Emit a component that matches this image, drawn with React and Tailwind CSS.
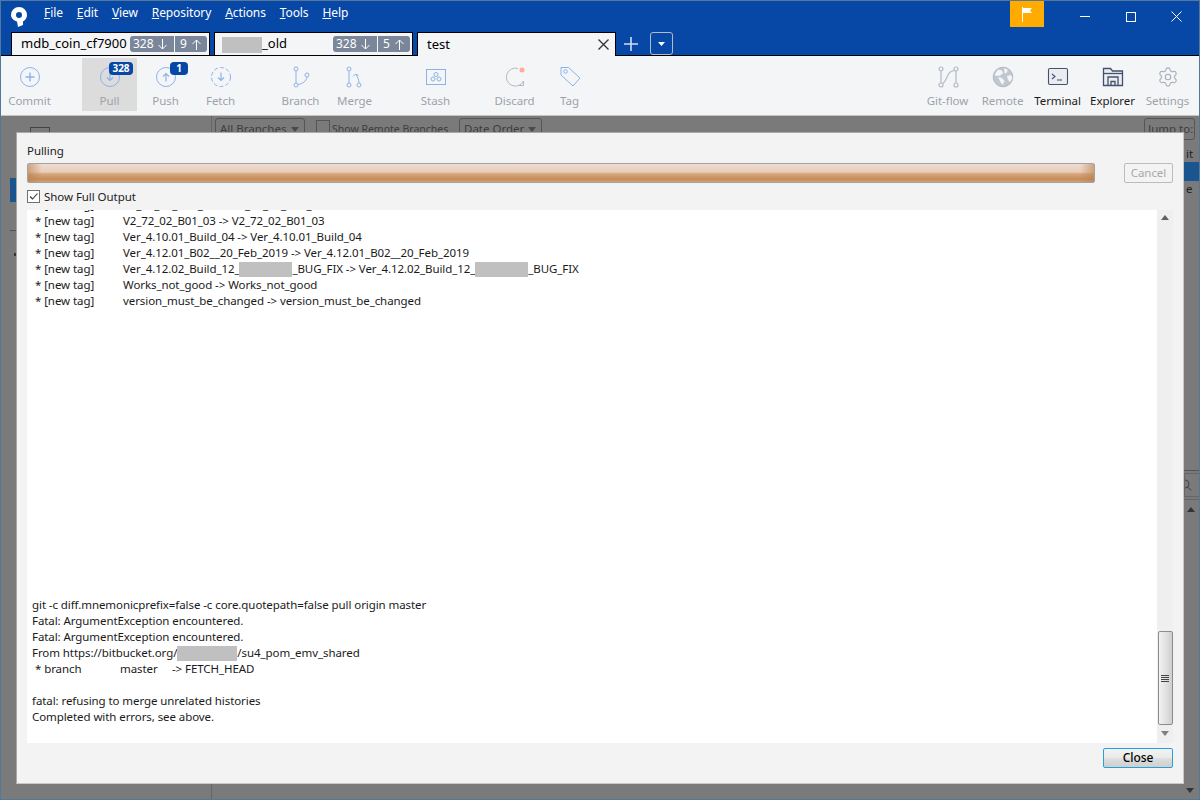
import { Settings } from 'lucide-react';

const FONT = "font-['Noto_Sans',sans-serif]";

function Menu({ first, rest }) {
  return (
    <span className="text-white">
      <span className="underline">{first}</span>{rest}
    </span>
  );
}

function Redacted({ w, h = 'h-[15px]', className = '' }) {
  return <span className={`inline-block align-middle bg-[#c0c0c0] ${w} ${h} ${className}`} />;
}

function Arrow({ up }) {
  return (
    <svg width="9" height="11" viewBox="0 0 9 11" fill="none" stroke="#fff" strokeWidth="1" className={up ? 'rotate-180' : ''}>
      <path d="M4.500 0v10M.500 6l4 4 4-4" />
    </svg>
  );
}

function CountPill({ down, up }) {
  return (
    <div className="flex h-4 text-[12px] leading-4 text-white shrink-0 gap-px">
      <span className="bg-[#7a869a] rounded-l-[3px] pl-[3px] flex items-center gap-[4px] w-[44px]">{down} <Arrow /></span>
      <span className="bg-[#7a869a] rounded-r-[3px] pl-[5px] flex items-center gap-[5px] w-[32px]">{up} <Arrow up /></span>
    </div>
  );
}

function Tab({ children, active, pill }) {
  return (
    <div className={`w-[199px] border-x border-t border-black bg-[#f4f5f7] flex items-center text-[13px] text-black pl-[9px] ${active ? 'h-6 -mb-px' : 'h-[23px]'}`}>
      <div className="flex-1 min-w-0 whitespace-nowrap">{children}</div>
      {pill}
    </div>
  );
}

function ToolButton({ label, icon, dark, pressed, badge, className = '' }) {
  return (
    <div className={`relative w-[55px] h-[53px] flex flex-col items-center shrink-0 ${pressed ? 'bg-[#dcdcdc]' : ''} ${className}`}>
      <div className="h-[22px] w-[22px] mt-[8px] flex items-center justify-center">{icon}</div>
      <div className={`mt-[5px] text-[11.500px] tracking-[-0.05px] leading-4 whitespace-nowrap ${dark ? 'text-[#1a1a1a]' : 'text-[#9da2aa]'}`}>{label}</div>
      {badge}
    </div>
  );
}

function Badge({ children, className }) {
  return (
    <span className={`absolute top-[4px] h-[13px] rounded-[4px] bg-[#0747a6] text-white text-[10px] leading-[13px] font-bold text-center ${className}`}>
      {children}
    </span>
  );
}

const BLUE = '#8db2ea';
const GRAY = '#b3bac5';
const NAVY = '#42526e';

function CircleIcon({ kind, dashed }) {
  return (
    <svg width="22" height="22" viewBox="0 0 22 22" fill="none" stroke={BLUE} strokeWidth="1">
      <circle cx="11" cy="11" r="9.500" strokeDasharray={dashed ? '4 2.200' : undefined} />
      {kind === 'plus' && <path d="M11 6.500v9M6.500 11h9" strokeWidth="1.400" />}
      {kind === 'down' && <path d="M11 6.500v8M8 11.500l3 3 3-3" strokeWidth="1.200" />}
      {kind === 'up' && <path d="M11 15.500v-8M8 10.500l3-3 3 3" strokeWidth="1.200" />}
    </svg>
  );
}

function BranchIcon() {
  return (
    <svg width="22" height="22" viewBox="0 0 22 22" fill="none" stroke={BLUE} strokeWidth="1">
      <circle cx="6" cy="3" r="2" />
      <circle cx="6" cy="19" r="2" />
      <circle cx="17" cy="9" r="2" />
      <path d="M6 5V17M8 18.500c4.500-.5 8.500-3.500 9-7.500" />
    </svg>
  );
}

function MergeIcon() {
  return (
    <svg width="22" height="22" viewBox="0 0 22 22" fill="none" stroke={BLUE} strokeWidth="1">
      <circle cx="5" cy="3" r="2" />
      <circle cx="5" cy="19" r="2" />
      <circle cx="15" cy="19" r="2" />
      <path d="M5 5V17M15 17c0-3.500-1.500-5.500-3-9M9 10.500L11.500 8l3 1.500" />
    </svg>
  );
}

function StashIcon() {
  return (
    <svg width="22" height="22" viewBox="0 0 22 22" fill="none" stroke={BLUE} strokeWidth="1">
      <rect x="1.500" y="3.500" width="19" height="15" />
      <circle cx="11" cy="8.500" r="2" />
      <circle cx="8" cy="13" r="2" />
      <circle cx="14" cy="13" r="2" />
    </svg>
  );
}

function DiscardIcon() {
  return (
    <svg width="22" height="22" viewBox="0 0 22 22" fill="none">
      <path d="M14 2.500A9 9 0 1 0 19.500 15" stroke={GRAY} strokeWidth="1" />
      <path d="M15 19.500h4.500V15" stroke={GRAY} strokeWidth="1" />
      <circle cx="18" cy="4" r="2.500" fill="#ffab9a" />
    </svg>
  );
}

function TagIcon() {
  return (
    <svg width="22" height="22" viewBox="0 0 22 22" fill="none" stroke={BLUE} strokeWidth="1">
      <path d="M2 1.500h7.500L21 12l-7 8L2 9z" />
      <circle cx="6.500" cy="5.500" r="1.800" />
    </svg>
  );
}

function GitFlowIcon() {
  return (
    <svg width="22" height="22" viewBox="0 0 22 22" fill="none" stroke={GRAY} strokeWidth="1.200">
      <circle cx="4" cy="3" r="2" />
      <circle cx="4" cy="19" r="2" />
      <circle cx="19" cy="3" r="2" />
      <circle cx="19" cy="19" r="2" />
      <path d="M4 5v12M19 5v12M5.500 17.500C11 15 9 5 17.500 4.500" />
    </svg>
  );
}

function GlobeIcon() {
  return (
    <svg width="22" height="22" viewBox="0 0 22 22" fill="none">
      <circle cx="11" cy="11" r="9.800" fill="#c1c7d0" stroke={GRAY} />
      <path d="M6 3.500l4 1 1 3-3 2-3 .5-2.500-1M12 2l4 2-1.500 3-2 .5M6 11l4 1 2.500 3-2 4-2-3zM15 10l4-1 1.500 3-2.500 4-2-2z" fill="#f4f5f7" />
    </svg>
  );
}

function TerminalIcon() {
  return (
    <svg width="22" height="22" viewBox="0 0 22 22" fill="none" stroke={NAVY} strokeWidth="1.100">
      <rect x="1.500" y="2.500" width="19" height="16" rx="1.500" fill="#ebecf0" />
      <path d="M5 8l3 2.500L5 13M10 14h5" />
    </svg>
  );
}

function ExplorerIcon() {
  return (
    <svg width="22" height="22" viewBox="0 0 22 22" fill="none" stroke={NAVY} strokeWidth="1.300">
      <path d="M1.500 19.500V2.500h7l2 2.500h10v14.500z" fill="#ebecf0" />
      <path d="M1.500 7.500h19" />
      <path d="M6 19.500v-8.500h10v8.500M9 19.500v-4h4v4" />
    </svg>
  );
}

function Caret() {
  return <svg width="8" height="5" viewBox="0 0 8 5" className="shrink-0"><path d="M0 0h8L4 5z" fill="#4a4a4a" /></svg>;
}

function LogLine({ tag, children }) {
  return (
    <div className="h-4 leading-4 whitespace-nowrap flex">
      <span className="w-[91px] pl-[3px] shrink-0">{tag}</span>
      <span>{children}</span>
    </div>
  );
}

function Log() {
  const tag = '* [new tag]';
  return (
    <div className="flex-1 min-w-0 bg-white overflow-hidden flex flex-col justify-between pl-[5px] pb-[18px] text-[11.500px] tracking-[-0.08px] text-[#1a1a1a]">
      <div className="-mt-[13px]">
        <LogLine tag={tag}>V2_72_02_B01_02 -&gt; V2_72_02_B01_02</LogLine>
        <LogLine tag={tag}>V2_72_02_B01_03 -&gt; V2_72_02_B01_03</LogLine>
        <LogLine tag={tag}>Ver_4.10.01_Build_04 -&gt; Ver_4.10.01_Build_04</LogLine>
        <LogLine tag={tag}>Ver_4.12.01_B02__20_Feb_2019 -&gt; Ver_4.12.01_B02__20_Feb_2019</LogLine>
        <LogLine tag={tag}>
          Ver_4.12.02_Build_12_<Redacted w="w-[53px]" />_BUG_FIX -&gt; Ver_4.12.02_Build_12_<Redacted w="w-[53px]" />_BUG_FIX
        </LogLine>
        <LogLine tag={tag}>Works_not_good -&gt; Works_not_good</LogLine>
        <LogLine tag={tag}>version_must_be_changed -&gt; version_must_be_changed</LogLine>
      </div>
      <div className="leading-4 whitespace-nowrap">
        <div>git -c diff.mnemonicprefix=false -c core.quotepath=false pull origin master</div>
        <div>Fatal: ArgumentException encountered.</div>
        <div>Fatal: ArgumentException encountered.</div>
        <div>From https://bitbucket.org/<Redacted w="w-[60px]" />/su4_pom_emv_shared</div>
        <div className="flex pl-[3px]">
          <span className="w-[85px]">* branch</span>
          <span className="w-[52px]">master</span>
          <span>-&gt; FETCH_HEAD</span>
        </div>
        <div className="h-4" />
        <div>fatal: refusing to merge unrelated histories</div>
        <div>Completed with errors, see above.</div>
      </div>
    </div>
  );
}

function Scrollbar() {
  return (
    <div className="w-4 bg-[#efefef] flex flex-col items-center shrink-0">
      <svg width="8" height="5" viewBox="0 0 8 5" className="mt-[5px]"><path d="M4 0l4 5H0z" fill="#606060" /></svg>
      <div className="flex-1" />
      <div className="w-[15px] h-[94px] rounded-[2px] border border-[#8c8c8c] bg-gradient-to-r from-[#f2f2f2] via-[#e2e2e2] to-[#cfcfcf] flex flex-col items-center justify-center gap-px">
        <div className="w-[8px] h-px bg-[#444]" />
        <div className="w-[8px] h-px bg-[#444]" />
        <div className="w-[8px] h-px bg-[#444]" />
        <div className="w-[8px] h-px bg-[#444]" />
      </div>
      <svg width="8" height="5" viewBox="0 0 8 5" className="mt-[6px] mb-[7px]"><path d="M0 0h8L4 5z" fill="#808080" /></svg>
    </div>
  );
}

function PullDialog() {
  return (
    <div className="absolute left-[15px] top-[131px] w-[1168px] h-[652px] bg-[#f3f3f3] border border-[#a8a8a8] border-r-[#c8c8c8] border-b-[#c8c8c8] flex flex-col pl-[10px] text-[11.500px] tracking-[-0.06px]">
      <div className="h-[16px] mt-[10px] leading-4 text-[#222]">Pulling</div>
      <div className="flex items-center mt-[4px] h-[20px]">
        <div className="w-[1068px] h-[20px] rounded-[2px] border border-[#a3a3a3] bg-[linear-gradient(to_bottom,#efdcd1_0%,#e8cdb9_45%,#d6a67c_55%,#c68d5a_85%,#d2a27a_100%)] relative overflow-hidden">
          <div className="absolute left-0 top-0 bottom-0 w-[14px] bg-gradient-to-r from-[#b9804f]/60 to-transparent" />
          <div className="absolute right-0 top-0 bottom-0 w-[14px] bg-gradient-to-l from-[#b9804f]/60 to-transparent" />
        </div>
        <div className="ml-[29px] w-[49px] h-[20px] rounded-[2px] border border-[#bcbcbc] leading-[18px] text-center text-[#a9a9a9]">Cancel</div>
      </div>
      <div className="flex items-center mt-[6px] h-[16px] text-[#222]">
        <svg width="13" height="13" viewBox="0 0 13 13" fill="none" className="mb-[2px]">
          <rect x="0.500" y="0.500" width="12" height="12" fill="#fff" stroke="#707070" />
          <path d="M3 6.500l2.500 2.500L10.500 3.500" stroke="#333" strokeWidth="1.100" />
        </svg>
        <span className="ml-[4px]">Show Full Output</span>
      </div>
      <div className="flex mt-[5px] h-[533px] w-[1146px]">
        <Log />
        <Scrollbar />
      </div>
      <div className="flex justify-end w-[1146px] mt-[5px]">
        <div className="w-[70px] h-[20px] rounded-[2px] border border-[#26a0da] bg-[linear-gradient(to_bottom,#f2f2f2_0%,#ebebeb_45%,#dddddd_55%,#cfcfcf_100%)] text-[12px] font-medium leading-[18px] text-center text-black">Close</div>
      </div>
    </div>
  );
}

export default function App() {
  return (
    <div className={`relative w-[1200px] h-[800px] overflow-hidden border border-[#54779c] bg-[#7a7a7a] flex flex-col ${FONT}`}>
      {/* Title bar with menus and tabs */}
      <div className="h-[55px] bg-[#0747a6] border-b border-black shrink-0 flex flex-col">
        <div className="h-[31px] flex items-start shrink-0">
          <svg width="20" height="22" viewBox="0 0 20 22" className="ml-[9px] mt-[5px]">
            <path fillRule="evenodd" fill="#fff" d="M9 1a8 8 0 0 1 8 8c0 3-1.500 5-4 6.500V19l-5 2-1-5.500C3.500 14.500 1 12 1 9a8 8 0 0 1 8-8zm0 5a3 3 0 1 0 0 6 3 3 0 0 0 0-6z" />
          </svg>
          <div className="ml-[14px] mt-[4px] flex gap-[14px] text-[12px] tracking-[-0.1px] leading-4">
            <Menu first="F" rest="ile" />
            <Menu first="E" rest="dit" />
            <Menu first="V" rest="iew" />
            <Menu first="R" rest="epository" />
            <Menu first="A" rest="ctions" />
            <Menu first="T" rest="ools" />
            <Menu first="H" rest="elp" />
          </div>
          <div className="flex-1" />
          <div className="w-[34px] h-[26px] bg-[#ffab00] flex items-start justify-center">
            <svg width="12" height="16" viewBox="0 0 12 16" className="mt-[5px]">
              <path d="M1.500 1v15" stroke="#fff" />
              <path d="M2 2h9l-2 2.500L11 7H2z" fill="#fff" />
            </svg>
          </div>
          <div className="w-[155px] h-[31px] flex items-center text-white">
            <div className="w-[1px] ml-[35px]" />
            <div className="w-[10px] h-px bg-white" />
            <div className="w-[10px] h-[10px] border border-white ml-[36px]" />
            <svg width="11" height="11" viewBox="0 0 11 11" className="ml-[35px]"><path d="M.500.500l10 10M10.500.500l-10 10" stroke="#fff" /></svg>
          </div>
        </div>
        <div className="flex items-end pl-[10px] gap-[4px] h-[23px]">
          <Tab pill={<div className="mr-[2px]"><CountPill down="328" up="9" /></div>}>mdb_coin_cf7900</Tab>
          <Tab pill={<div className="mr-[2px]"><CountPill down="328" up="5" /></div>}><Redacted w="w-[40px]" h="h-[16px]" className="-ml-[2px]" />_old</Tab>
          <Tab active pill={<svg width="11" height="11" viewBox="0 0 11 11" className="mr-[6px]"><path d="M.500.500l10 10M10.500.500l-10 10" stroke="#333" strokeWidth="1.300" /></svg>}>test</Tab>
          <svg width="16" height="16" viewBox="0 0 16 16" className="ml-[3px] mb-[3px] shrink-0"><path d="M8 1v14M1 8h14" stroke="#d4dcec" strokeWidth="1.600" /></svg>
          <div className="ml-[7px] w-[23px] h-[23px] rounded-[3px] border border-[#b3bac5] flex items-center justify-center">
            <svg width="7" height="4" viewBox="0 0 7 4"><path d="M0 0h7L3.500 4z" fill="#fff" /></svg>
          </div>
        </div>
      </div>

      {/* Toolbar */}
      <div className="h-[60px] bg-[#f4f5f7] border-b border-[#c4c4c4] shrink-0 flex pt-[2px] pl-[1px]">
        <ToolButton label="Commit" icon={<CircleIcon kind="plus" />} />
        <ToolButton label="Pull" pressed className="ml-[25px]" icon={<CircleIcon kind="down" />} badge={<Badge className="left-[27px] w-[24px]">328</Badge>} />
        <ToolButton label="Push" className="ml-px" icon={<CircleIcon kind="up" />} badge={<Badge className="left-[32px] w-[18px]">1</Badge>} />
        <ToolButton label="Fetch" icon={<CircleIcon kind="down" dashed />} />
        <ToolButton label="Branch" className="ml-[25px]" icon={<BranchIcon />} />
        <ToolButton label="Merge" className="-ml-px" icon={<MergeIcon />} />
        <ToolButton label="Stash" className="ml-[26px]" icon={<StashIcon />} />
        <ToolButton label="Discard" className="ml-[24px]" icon={<DiscardIcon />} />
        <ToolButton label="Tag" icon={<TagIcon />} />
        <div className="flex-1" />
        <ToolButton label="Git-flow" icon={<GitFlowIcon />} />
        <ToolButton label="Remote" icon={<GlobeIcon />} />
        <ToolButton label="Terminal" dark icon={<TerminalIcon />} />
        <ToolButton label="Explorer" dark icon={<ExplorerIcon />} />
        <ToolButton label="Settings" icon={<Settings size={24} strokeWidth={1.200} color="#a5adba" />} className="mr-[4px]" />
      </div>

      {/* Dimmed main window behind the dialog */}
      <div className="flex-1 min-h-0 flex text-[11.500px] text-[#3d3d3d]">
        <div className="w-[211px] shrink-0 border-r border-[#666] flex flex-col">
          <div className="ml-[29px] mt-[11px] w-[20px] h-[6px] border border-[#444] border-b-0" />
          <div className="ml-[9px] mt-[45px] w-[6px] h-[24px] bg-[#1a5590]" />
          <div className="ml-[9px] mt-[28px] w-[6px] h-px bg-[#555]" />
          <div className="ml-[13px] mt-[22px] w-[2px] h-[3px] bg-[#333]" />
        </div>
        <div className="flex-1 min-w-0 flex flex-col">
          <div className="flex items-start h-4 pl-[3px] pt-[2px] whitespace-nowrap">
            <div className="w-[90px] h-[22px] rounded-[3px] border border-[#555] pl-[4px] pr-[5px] leading-[20px] flex items-center justify-between">All Branches<Caret /></div>
            <div className="ml-[11px] w-[132px] pt-[1px] flex items-start gap-[2px] leading-[20px] text-[10.500px]"><div className="w-[14px] h-[14px] border border-[#555] mt-px shrink-0" />Show Remote Branches</div>
            <div className="ml-[11px] w-[83px] h-[22px] rounded-[3px] border border-[#555] pl-[4px] pr-[5px] leading-[20px] flex items-center justify-between">Date Order<Caret /></div>
            <div className="flex-1" />
            <div className="w-[51px] h-[22px] rounded-[3px] border border-[#555] pl-[3px] mr-[4px] leading-[20px]">Jump to:</div>
          </div>
        </div>
      </div>
      <div className="absolute left-[1183px] top-[145px] w-[16px] text-[11.500px] leading-4 text-[#222]">
        <div className="h-[16px] pl-[2px]">it</div>
        <div className="h-[19px] w-[16px] bg-[#1a5590]" />
        <div className="h-[16px] pl-[2px]">e</div>
      </div>
      {/* scraps of the commit details pane at the right edge */}
      <div className="absolute left-[1183px] top-[469px] w-[16px] flex flex-col">
        <div className="h-px bg-[#555]" />
        <div className="h-[24px] mt-[2px] border border-r-0 border-[#666] flex items-center">
          <svg width="8" height="12" viewBox="0 0 8 12" fill="none" stroke="#444"><path d="M0 1a4 4 0 0 1 0 8M2.500 8l4 3.500" /></svg>
        </div>
        <div className="h-px bg-[#666] mt-[2px]" />
        <svg width="8" height="5" viewBox="0 0 8 5" className="ml-[3px] mt-[7px]"><path d="M4 0l4 5H0z" fill="#333" /></svg>
      </div>
      <svg width="8" height="5" viewBox="0 0 8 5" className="absolute left-[1185px] top-[787px]"><path d="M0 0h8L4 5z" fill="#333" /></svg>

      <PullDialog />
    </div>
  );
}
